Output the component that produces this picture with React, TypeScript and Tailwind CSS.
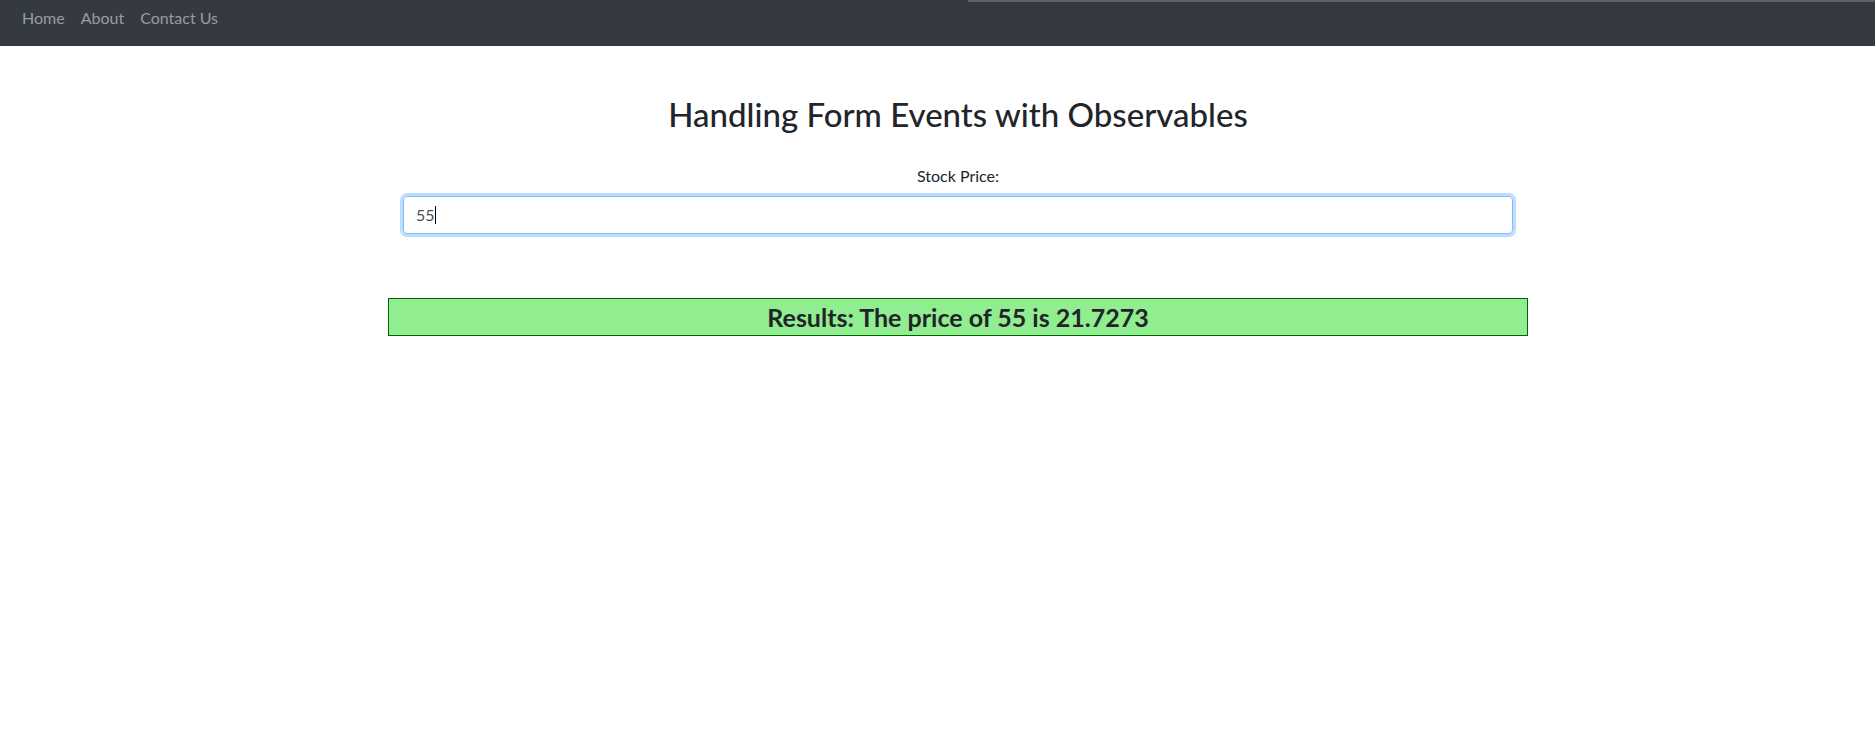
export default function App() {
  const links = ["Home", "About", "Contact Us"];

  return (
    <div className="min-h-screen bg-white text-[#212529] font-['Lato','Liberation_Sans',sans-serif]">
      <nav className="relative h-[46px] bg-[#343a40] flex items-center px-[14px]">
        <div className="absolute top-0 left-[968px] right-0 h-[2px] bg-[#5f6165]" />
        {links.map((l) => (
          <a
            key={l}
            href="#"
            className="px-[8px] text-[16px] leading-[24px] text-[#9a9ca0] -mt-[10px]"
          >
            {l}
          </a>
        ))}
      </nav>

      <div className="flex justify-center pl-[41px]">
        <div className="w-[1140px]">
          <div className="px-[15px]">
            <h2 className="mt-[49px] text-center text-[33px] leading-[38px] font-medium">
              Handling Form Events with Observables
            </h2>
            <label className="block mt-[31px] text-center text-[16px] leading-[24px]">
              Stock Price:
            </label>
            <div className="mt-[8px] h-[38px] rounded-[4px] border border-[#80bdff] shadow-[0_0_0_3px_rgba(0,123,255,0.25)] px-[12px] flex items-center text-[16px] text-[#495057]">
              <span>55</span>
              <span className="w-px h-[18px] bg-black" />
            </div>
          </div>

          <div className="mt-[64px] h-[38px] border border-[#006400] bg-[#90ee90] flex items-center justify-center">
            <h4 className="text-[25px] leading-[36px] font-bold">
              Results: The price of 55 is 21.7273
            </h4>
          </div>
        </div>
      </div>
    </div>
  );
}
